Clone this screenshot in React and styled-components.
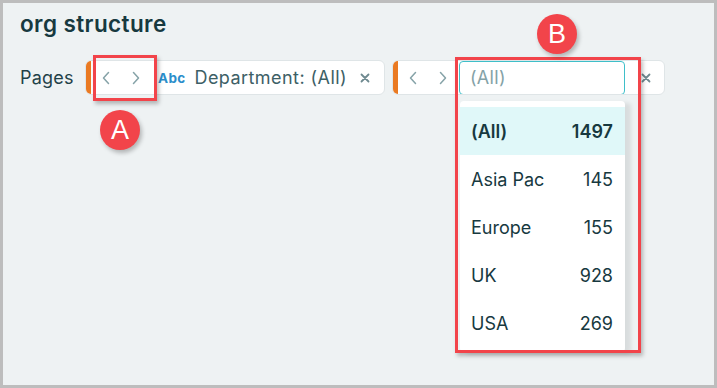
import React from "react";
import styled, { createGlobalStyle } from "styled-components";

const Global = createGlobalStyle`
  html, body { margin: 0; padding: 0; }
  body { font-family: Inter, "Noto Sans", sans-serif; background: #bdbdbd; }
  * { box-sizing: border-box; }
`;

const Frame = styled.div`
  position: relative;
  width: 717px;
  height: 388px;
  border: 3px solid #bdbdbd;
  background: #eef2f3;
  padding: 7px 17px;
  overflow: hidden;
`;

const Title = styled.h1`
  margin: 0;
  font-size: 22.5px;
  font-weight: 600;
  color: #17393f;
  line-height: 28px;
  letter-spacing: 0.4px;
`;

const FilterRow = styled.div`
  display: flex;
  align-items: center;
  margin-top: 22px;
  gap: 7px;
`;

const PagesLabel = styled.span`
  width: 58px;
  font-size: 18px;
  color: #1f4148;
  letter-spacing: 0.2px;
`;

const Pill = styled.div`
  display: flex;
  align-items: center;
  height: 35px;
  width: ${(p) => p.$w}px;
  background: #fff;
  border: 1px solid #dfe5e7;
  border-radius: 6px;
  overflow: hidden;
`;

const Accent = styled.div`
  width: 6px;
  align-self: stretch;
  margin: -1px 0 -1px -1px;
  background: #ea7a22;
  border-radius: 6px 0 0 6px;
`;

const NavBtn = styled.button`
  width: 30px;
  height: 100%;
  border: none;
  background: none;
  padding: 0;
  display: flex;
  align-items: center;
  justify-content: center;
  color: #86a3a8;
`;

const Abc = styled.span`
  font-size: 13.5px;
  font-weight: 700;
  color: #2b8ecb;
  margin-left: 7px;
  letter-spacing: 0.3px;
`;

const PillText = styled.span`
  font-size: 18px;
  color: #3d6066;
  margin-left: 9px;
  letter-spacing: 0.45px;
`;

const Close = styled.span`
  display: flex;
  align-items: center;
  color: #6f8a90;
  margin-left: ${(p) => p.$ml}px;
`;

const SearchInput = styled.div`
  width: 166px;
  height: 34px;
  margin-left: 1px;
  border: 1px solid #3fbfc9;
  border-radius: 4px;
  display: flex;
  align-items: center;
  padding-left: 10px;
  font-size: 18px;
  letter-spacing: 0.3px;
  color: #84a2a7;
  background: #fff;
`;

const Dropdown = styled.div`
  position: absolute;
  left: 457px;
  top: 98px;
  width: 165px;
  height: 251px;
  background: #fff;
  border-radius: 4px;
  padding-top: 6px;
  box-shadow: 6px 2px 4px rgba(0, 0, 0, 0.09);
`;

const Option = styled.div`
  display: flex;
  justify-content: space-between;
  align-items: center;
  height: 48px;
  padding: 0 12px 0 11px;
  font-size: 18px;
  color: #17393f;
  font-weight: ${(p) => (p.$active ? 600 : 400)};
  background: ${(p) => (p.$active ? "#e0f8f9" : "transparent")};
`;

const RedBox = styled.div`
  position: absolute;
  left: ${(p) => p.$x}px;
  top: ${(p) => p.$y}px;
  width: ${(p) => p.$w}px;
  height: ${(p) => p.$h}px;
  border: 3px solid #f2444a;
  box-shadow: 2px 3px 4px rgba(0, 0, 0, 0.25);
`;

const Badge = styled.div`
  position: absolute;
  left: ${(p) => p.$x}px;
  top: ${(p) => p.$y}px;
  width: 40px;
  height: 40px;
  border-radius: 50%;
  background: #f2444a;
  color: #fff;
  font-family: "Liberation Sans", Arial, sans-serif;
  font-size: 27px;
  display: flex;
  align-items: center;
  justify-content: center;
  box-shadow: 2px 3px 4px rgba(0, 0, 0, 0.25);
`;

const Chevron = ({ dir }) => (
  <svg width="10" height="16" viewBox="0 0 10 16" fill="none" stroke="currentColor" strokeWidth="1.5" strokeLinecap="round" strokeLinejoin="round">
    {dir === "left" ? <path d="M7.5 2.5 L2.5 8 L7.5 13.5" /> : <path d="M2.5 2.5 L7.5 8 L2.5 13.5" />}
  </svg>
);

const XIcon = () => (
  <svg width="10" height="10" viewBox="0 0 10 10" stroke="currentColor" strokeWidth="1.8" strokeLinecap="round">
    <path d="M1.5 1.5 L8.5 8.5 M8.5 1.5 L1.5 8.5" />
  </svg>
);

const options = [
  ["(All)", "1497", true],
  ["Asia Pac", "145"],
  ["Europe", "155"],
  ["UK", "928"],
  ["USA", "269"],
];

export default function App() {
  return (
    <>
      <Global />
      <Frame>
        <Title>org structure</Title>
        <FilterRow>
          <PagesLabel>Pages</PagesLabel>
          <Pill $w={300}>
            <Accent />
            <NavBtn><Chevron dir="left" /></NavBtn>
            <NavBtn><Chevron dir="right" /></NavBtn>
            <Abc>Abc</Abc>
            <PillText>Department: (All)</PillText>
            <Close $ml={13}><XIcon /></Close>
          </Pill>
          <Pill $w={273}>
            <Accent />
            <NavBtn><Chevron dir="left" /></NavBtn>
            <NavBtn><Chevron dir="right" /></NavBtn>
            <SearchInput>(All)</SearchInput>
            <Close $ml={16}><XIcon /></Close>
          </Pill>
        </FilterRow>
        <Dropdown>
          {options.map(([label, n, active]) => (
            <Option key={label} $active={active}>
              <span>{label}</span>
              <span>{n}</span>
            </Option>
          ))}
        </Dropdown>
        <RedBox $x={90} $y={52} $w={64} $h={46} />
        <RedBox $x={452} $y={54} $w={186} $h={296} />
        <Badge $x={97} $y={107}>A</Badge>
        <Badge $x={534} $y={11}>B</Badge>
      </Frame>
    </>
  );
}
